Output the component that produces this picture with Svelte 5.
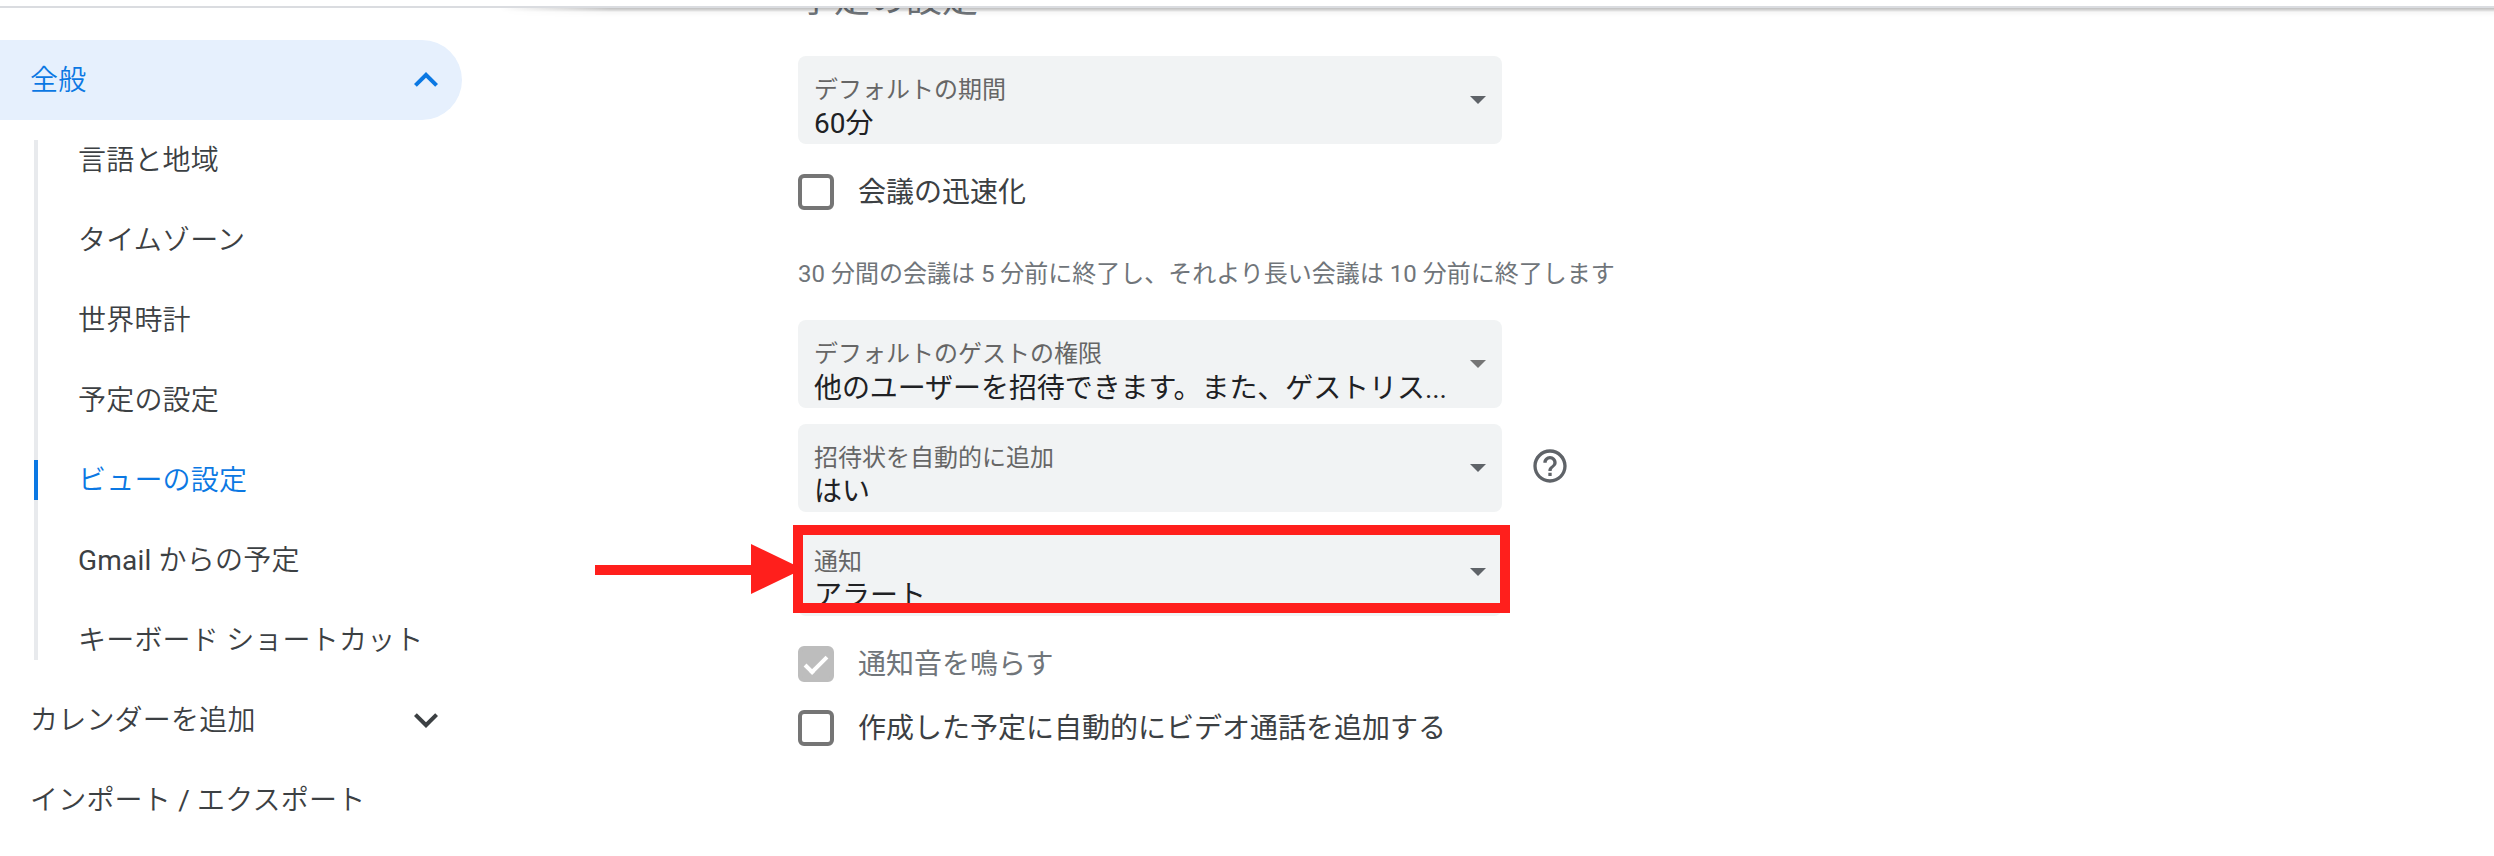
<script>
	let active = "ビューの設定";
	let open = true;

	const sections = [
		"言語と地域",
		"タイムゾーン",
		"世界時計",
		"予定の設定",
		"ビューの設定",
		"Gmail からの予定",
		"キーボード ショートカット",
	];

	let fast = false;
	let sound = true;
	let video = false;
</script>

<div class="page">
	<header></header>
	<div class="columns">
		<nav>
			<button class="group open" on:click={() => (open = !open)}>
				<span>全般</span>
				<svg width="48" height="48" viewBox="0 0 24 24">
					<path d="M12 8l-6 6 1.41 1.41L12 10.83l4.59 4.58L18 14z" />
				</svg>
			</button>
			{#if open}
				<ul>
					{#each sections as name}
						<li class:active={name === active}>
							<button on:click={() => (active = name)}><span>{name}</span></button>
						</li>
					{/each}
				</ul>
			{/if}
			<button class="group">
				<span>カレンダーを追加</span>
				<svg width="48" height="48" viewBox="0 0 24 24">
					<path d="M7.41 8.59L12 13.17l4.59-4.58L18 10l-6 6-6-6z" />
				</svg>
			</button>
			<button class="group"><span>インポート / エクスポート</span></button>
		</nav>

		<main>
			<div class="heading"><h2>予定の設定</h2></div>

			<div class="select">
				<div class="label">デフォルトの期間</div>
				<div class="value">60分</div>
				<i class="caret"></i>
			</div>

			<label class="check">
				<input type="checkbox" bind:checked={fast} />
				<span>会議の迅速化</span>
			</label>
			<p>30 分間の会議は 5 分前に終了し、それより長い会議は 10 分前に終了します</p>

			<div class="select">
				<div class="label">デフォルトのゲストの権限</div>
				<div class="value long">他のユーザーを招待できます。また、ゲストリス...</div>
				<i class="caret grey"></i>
			</div>

			<div class="row">
				<div class="select">
					<div class="label">招待状を自動的に追加</div>
					<div class="value">はい</div>
					<i class="caret"></i>
				</div>
				<svg class="help" width="40" height="40" viewBox="0 0 24 24">
					<path d="M11 18h2v-2h-2v2zm1-16C6.48 2 2 6.48 2 12s4.48 10 10 10 10-4.48 10-10S17.52 2 12 2zm0 18c-4.41 0-8-3.59-8-8s3.59-8 8-8 8 3.59 8 8-3.59 8-8 8zm0-14c-2.21 0-4 1.79-4 4h2c0-1.1.9-2 2-2s2 .9 2 2c0 2-3 1.75-3 5h2c0-2.25 3-2.5 3-5 0-2.21-1.79-4-4-4z" />
				</svg>
			</div>

			<div class="select">
				<div class="label">通知</div>
				<div class="value">アラート</div>
				<i class="caret"></i>
				<div class="frame"></div>
				<svg class="arrow" width="208" height="50" viewBox="0 0 208 50">
					<path d="M0 21h156V0l52 25-52 25V31H0z" />
				</svg>
			</div>

			<label class="check sound">
				<input type="checkbox" bind:checked={sound} disabled />
				<span>通知音を鳴らす</span>
			</label>
			<label class="check">
				<input type="checkbox" bind:checked={video} />
				<span>作成した予定に自動的にビデオ通話を追加する</span>
			</label>
		</main>
	</div>
</div>

<style>
	:global(body) {
		background: #fff;
	}

	.page {
		height: 856px;
		overflow: hidden;
		font-family: Roboto, "Noto Sans CJK JP", sans-serif;
		font-size: 28px;
		color: #3c4043;
	}

	header {
		box-sizing: border-box;
		height: 8px;
		border-bottom: 2px solid #dadce0;
	}

	.columns {
		display: flex;
	}

	nav {
		width: 462px;
		padding-top: 32px;
	}

	button {
		display: flex;
		align-items: center;
		width: 100%;
		height: 80px;
		padding: 0;
		border: 0;
		background: none;
		font: inherit;
		font-family: Roboto, "Noto Sans CJK JP DemiLight", "Noto Sans CJK JP", sans-serif;
		letter-spacing: 0.2px;
		color: inherit;
		text-align: left;
	}

	button span {
		padding-bottom: 5px;
	}

	.group {
		justify-content: space-between;
		padding: 0 12px 0 30px;
	}

	.group.open {
		border-radius: 0 40px 40px 0;
		background: #e6f0fd;
		color: #0b78e3;
	}

	svg {
		fill: currentColor;
	}

	ul {
		position: relative;
		margin: 0;
		padding: 0;
		list-style: none;
	}

	ul::before {
		content: "";
		position: absolute;
		left: 34px;
		top: 20px;
		bottom: 20px;
		width: 4px;
		background: #e8eaed;
	}

	li {
		position: relative;
		padding-left: 78px;
	}

	li.active {
		color: #0b78e3;
	}

	li.active::before {
		content: "";
		position: absolute;
		left: 34px;
		top: 20px;
		width: 4px;
		height: 40px;
		background: #0b78e3;
	}

	main {
		position: relative;
		flex: 1;
		padding-left: 336px;
	}

	/* scroll shadow under the header */
	main::before {
		content: "";
		position: absolute;
		left: 38px;
		right: 0;
		top: 0;
		height: 9px;
		background: linear-gradient(rgba(0, 0, 0, 0.25), rgba(0, 0, 0, 0.15) 25%, rgba(0, 0, 0, 0.03) 45%, rgba(0, 0, 0, 0));
		-webkit-mask-image: linear-gradient(to right, transparent, #000 110px);
		mask-image: linear-gradient(to right, transparent, #000 110px);
	}

	.heading {
		display: flex;
		align-items: flex-end;
		height: 14px;
		margin-bottom: 34px;
		overflow: hidden;
	}

	h2 {
		margin: 0;
		font-size: 36px;
		font-weight: 400;
		line-height: 44px;
		color: #70757a;
	}

	.select {
		position: relative;
		box-sizing: border-box;
		width: 704px;
		height: 88px;
		margin-bottom: 16px;
		padding: 18px 50px 0 16px;
		border-radius: 8px;
		background: #f1f3f4;
	}

	.label {
		font-size: 24px;
		line-height: 32px;
		color: #666;
	}

	.value {
		line-height: 35px;
		color: #202124;
		white-space: nowrap;
	}

	.value.long {
		line-height: 38px;
		letter-spacing: -0.08px;
	}

	.caret {
		position: absolute;
		right: 16px;
		top: 40px;
		border: 8px solid transparent;
		border-top-color: #5f6368;
		border-bottom: 0;
	}

	.caret.grey {
		border-top-color: #757575;
	}

	.row {
		display: flex;
	}

	.help {
		margin: 22px 0 0 28px;
		color: #5f6368;
	}

	.frame {
		position: absolute;
		left: -5px;
		right: -8px;
		top: -3px;
		bottom: 3px;
		border: 10px solid #ff1f1c;
	}

	.arrow {
		position: absolute;
		left: -203px;
		top: 16px;
		color: #ff1f1c;
	}

	.check {
		display: flex;
		align-items: center;
		gap: 24px;
		height: 64px;
	}

	.check span {
		padding-bottom: 5px;
	}

	.check.sound {
		margin-top: 16px;
		color: #70757a;
	}

	input {
		appearance: none;
		box-sizing: border-box;
		width: 36px;
		height: 36px;
		margin: 0;
		border: 4px solid #757575;
		border-radius: 6px;
	}

	input:disabled {
		position: relative;
		border-color: #bdbdbd;
		background: #bdbdbd;
	}

	input:disabled::after {
		content: "";
		position: absolute;
		left: 8px;
		top: 1px;
		width: 8px;
		height: 19px;
		border: solid #fff;
		border-width: 0 4px 4px 0;
		transform: rotate(45deg);
	}

	p {
		margin: 31px 0 27px;
		font-size: 24px;
		line-height: 38px;
		color: #70757a;
	}
</style>
